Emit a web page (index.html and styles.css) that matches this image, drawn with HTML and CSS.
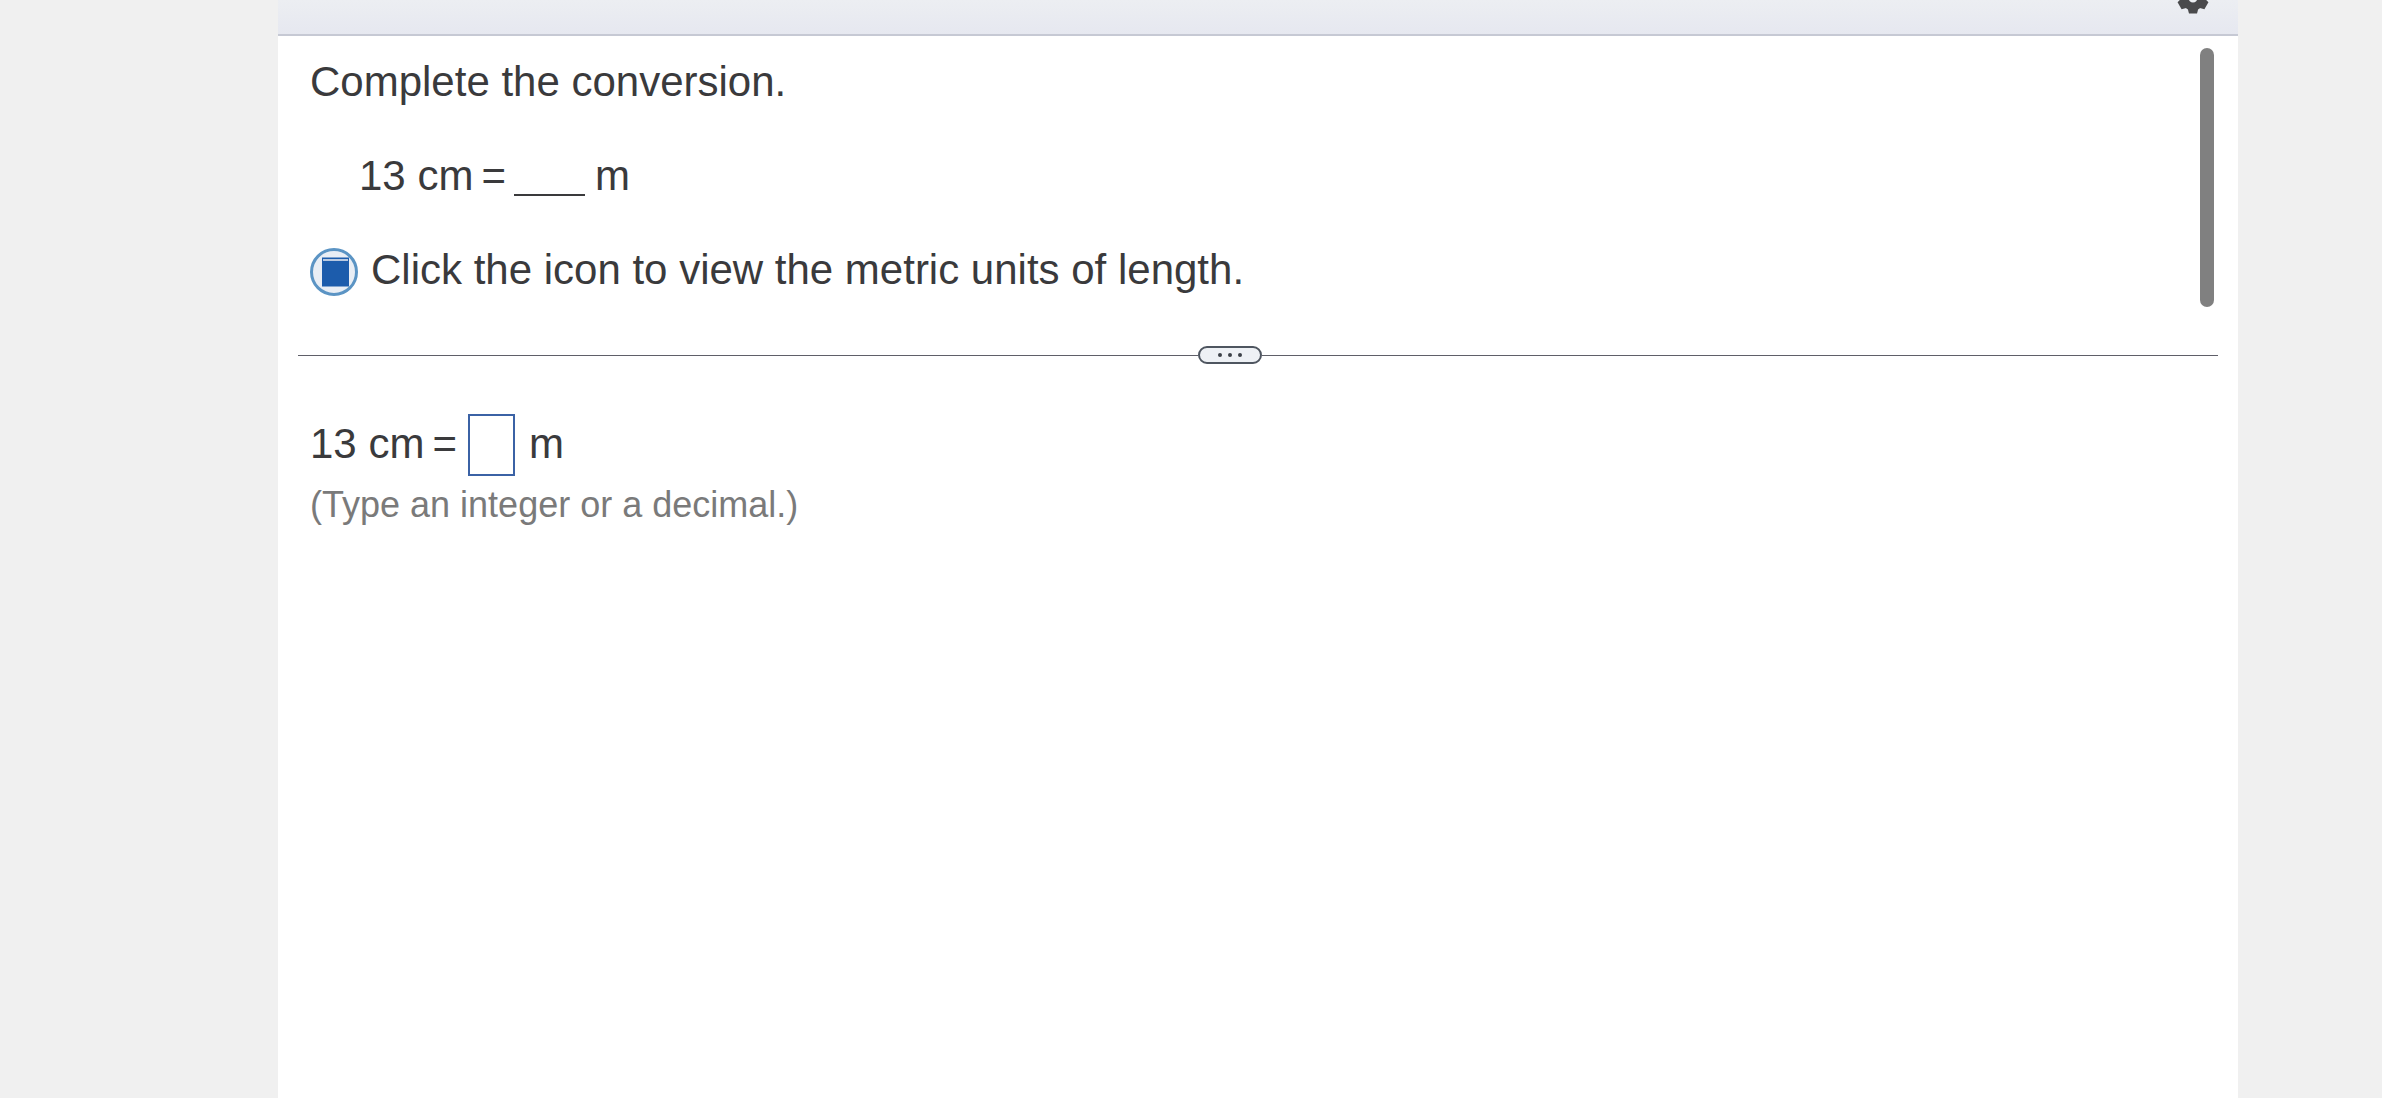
FILE: index.html
```html
<!DOCTYPE html>
<html lang="en">
<head>
<meta charset="utf-8">
<title>Complete the conversion</title>
<link rel="stylesheet" href="styles.css">
</head>
<body>
<main class="panel">
  <header class="topbar">
    <svg class="gear" width="32" height="32" viewBox="-16 -16 32 32" aria-hidden="true">
      <g fill="#4a4a4c">
        <path fill-rule="evenodd" d="M12.5 0A12.5 12.5 0 1 1 -12.5 0 12.5 12.5 0 1 1 12.5 0ZM4.5 0A4.5 4.5 0 1 0 -4.5 0 4.5 4.5 0 1 0 4.5 0Z"/>
        <path d="M-5.5 10H5.5L4 15.5H-4Z"/>
        <path transform="rotate(60)" d="M-5.5 10H5.5L4 15.5H-4Z"/>
        <path transform="rotate(120)" d="M-5.5 10H5.5L4 15.5H-4Z"/>
        <path transform="rotate(180)" d="M-5.5 10H5.5L4 15.5H-4Z"/>
        <path transform="rotate(240)" d="M-5.5 10H5.5L4 15.5H-4Z"/>
        <path transform="rotate(300)" d="M-5.5 10H5.5L4 15.5H-4Z"/>
      </g>
    </svg>
  </header>
  <section class="question">
    <div class="question-text">
      <p class="prompt">Complete the conversion.</p>
      <p class="equation"><span>13 cm</span><span class="equals">=</span><span class="blank"></span><span class="unit">m</span></p>
      <p class="hint">
        <svg class="info-icon" width="50" height="50" viewBox="0 0 50 50" aria-hidden="true">
          <circle cx="25" cy="25" r="22.5" fill="#e9eef5" stroke="#5b94c4" stroke-width="3"/>
          <rect x="13" y="10.5" width="27" height="29" fill="#1c5cac"/>
          <rect x="14" y="12" width="25" height="2" fill="#b9c9e0"/>
        </svg>
        <span>Click the icon to view the metric units of length.</span>
      </p>
    </div>
    <div class="scrollbar"></div>
  </section>
  <div class="divider">
    <span class="rule rule-left"></span>
    <span class="pill"><i></i><i></i><i></i></span>
    <span class="rule"></span>
  </div>
  <section class="answer">
    <p class="answer-line"><span class="answer-text">13 cm</span><span class="answer-text equals">=</span><span class="input-box"></span><span class="answer-text unit">m</span></p>
    <p class="note">(Type an integer or a decimal.)</p>
  </section>
</main>
</body>
</html>
```
FILE: styles.css
```css
html, body {
  margin: 0;
  height: 100%;
  overflow: hidden;
}
body {
  background: #f0f0f0;
  display: grid;
  grid-template-columns: 278px 1960px 1fr;
  font-family: "Liberation Sans", Arial, sans-serif;
  color: #3a3a3c;
}
.panel {
  grid-column: 2;
  background: #fff;
  display: flex;
  flex-direction: column;
  height: 1098px;
}
.topbar {
  height: 36px;
  flex: none;
  box-sizing: border-box;
  background: linear-gradient(#eceef2, #e6e8f0);
  border-bottom: 2px solid #c6c9d4;
  display: flex;
  justify-content: flex-end;
  align-items: flex-start;
  padding-right: 29px;
  overflow: hidden;
}
.gear {
  margin-top: -18px;
}
.question {
  display: flex;
  justify-content: space-between;
  height: 309px;
  flex: none;
  padding: 0 24px 0 32px;
  box-sizing: border-box;
}
.question p, .answer p {
  margin: 0;
}
.question-text {
  font-size: 42px;
  line-height: 48px;
}
.prompt {
  padding-top: 22px;
}
.equation {
  display: flex;
  padding: 46px 0 0 49px;
}
.equals {
  margin-left: 8px;
}
.blank {
  width: 71px;
  height: 2px;
  margin: 42px 0 0 8px;
  background: #3a3a3c;
}
.unit {
  margin-left: 10px;
}
.hint {
  display: flex;
  align-items: flex-start;
  gap: 12px;
  padding-top: 46px;
}
.info-icon {
  flex: none;
  margin-left: -1px;
  margin-top: 1px;
}
.scrollbar {
  width: 14px;
  height: 259px;
  margin-top: 12px;
  border-radius: 7px;
  background: #808080;
}
.divider {
  display: flex;
  align-items: center;
  height: 20px;
  margin: 0 20px;
  flex: none;
}
.rule {
  flex: 1;
  height: 1px;
  background: #5f5f68;
}
.rule-left {
  flex: none;
  width: 900px;
}
.pill {
  box-sizing: border-box;
  width: 64px;
  height: 18px;
  border: 2px solid #4f5660;
  border-radius: 9px;
  background: #eef1f5;
  display: flex;
  align-items: center;
  justify-content: center;
  gap: 6px;
}
.pill i {
  width: 4px;
  height: 4px;
  border-radius: 50%;
  background: #3d4248;
}
.answer {
  padding: 49px 32px 0;
}
.answer-line {
  display: flex;
  align-items: flex-start;
  font-size: 42px;
}
.answer-text {
  line-height: 60px;
}
.input-box {
  width: 47px;
  height: 62px;
  box-sizing: border-box;
  border: 2px solid #3b62a5;
  background: #fff;
  margin-left: 11px;
}
.answer-line .unit {
  margin-left: 14px;
}
.note {
  font-size: 36px;
  line-height: 42px;
  color: #7a7a7a;
  margin-top: 8px !important;
}
```
